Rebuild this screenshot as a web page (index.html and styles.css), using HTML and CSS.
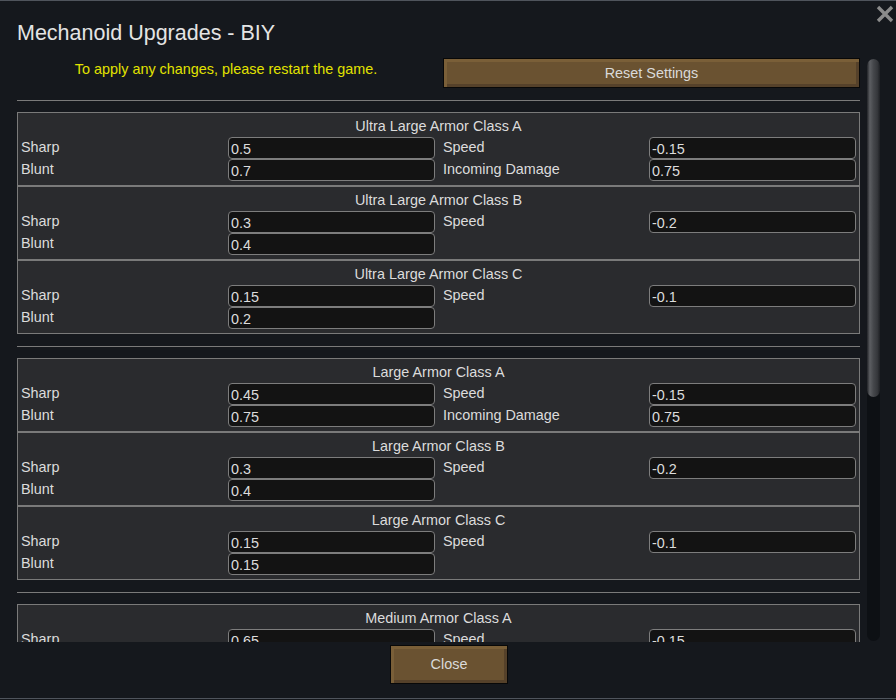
FILE: index.html
```html
<!DOCTYPE html>
<html>
<head>
<meta charset="utf-8">
<link rel="stylesheet" href="styles.css">
</head>
<body>
<div class="window">
  <div class="title">Mechanoid Upgrades - BIY</div>
  <div class="close-x">
    <svg width="18" height="18" viewBox="0 0 18 18"><path d="M2 2 L16 16 M16 2 L2 16" stroke="#8b8b8b" stroke-width="3.4" fill="none"/></svg>
  </div>
  <div class="body">
    <div class="scroll">
      <div class="top-row">
        <div class="notice">To apply any changes, please restart the game.</div>
        <div class="btn reset">Reset Settings</div>
      </div>
      <div class="sep"></div>

      <div class="group">
        <div class="sub">
          <div class="head">Ultra Large Armor Class A</div>
          <div class="grid">
            <div class="lbl">Sharp</div><div class="field">0.5</div><div class="lbl r">Speed</div><div class="field">-0.15</div>
            <div class="lbl">Blunt</div><div class="field">0.7</div><div class="lbl r">Incoming Damage</div><div class="field">0.75</div>
          </div>
        </div>
        <div class="sub">
          <div class="head">Ultra Large Armor Class B</div>
          <div class="grid">
            <div class="lbl">Sharp</div><div class="field">0.3</div><div class="lbl r">Speed</div><div class="field">-0.2</div>
            <div class="lbl">Blunt</div><div class="field">0.4</div>
          </div>
        </div>
        <div class="sub">
          <div class="head">Ultra Large Armor Class C</div>
          <div class="grid">
            <div class="lbl">Sharp</div><div class="field">0.15</div><div class="lbl r">Speed</div><div class="field">-0.1</div>
            <div class="lbl">Blunt</div><div class="field">0.2</div>
          </div>
        </div>
      </div>
      <div class="sep"></div>

      <div class="group">
        <div class="sub">
          <div class="head">Large Armor Class A</div>
          <div class="grid">
            <div class="lbl">Sharp</div><div class="field">0.45</div><div class="lbl r">Speed</div><div class="field">-0.15</div>
            <div class="lbl">Blunt</div><div class="field">0.75</div><div class="lbl r">Incoming Damage</div><div class="field">0.75</div>
          </div>
        </div>
        <div class="sub">
          <div class="head">Large Armor Class B</div>
          <div class="grid">
            <div class="lbl">Sharp</div><div class="field">0.3</div><div class="lbl r">Speed</div><div class="field">-0.2</div>
            <div class="lbl">Blunt</div><div class="field">0.4</div>
          </div>
        </div>
        <div class="sub">
          <div class="head">Large Armor Class C</div>
          <div class="grid">
            <div class="lbl">Sharp</div><div class="field">0.15</div><div class="lbl r">Speed</div><div class="field">-0.1</div>
            <div class="lbl">Blunt</div><div class="field">0.15</div>
          </div>
        </div>
      </div>
      <div class="sep"></div>

      <div class="group">
        <div class="sub">
          <div class="head">Medium Armor Class A</div>
          <div class="grid">
            <div class="lbl">Sharp</div><div class="field">0.65</div><div class="lbl r">Speed</div><div class="field">-0.15</div>
            <div class="lbl">Blunt</div><div class="field">0.6</div><div class="lbl r">Incoming Damage</div><div class="field">0.8</div>
          </div>
        </div>
      </div>
    </div>
    <div class="scrollbar"><div class="thumb"></div></div>
  </div>
  <div class="footer">
    <div class="btn close">Close</div>
  </div>
</div>
</body>
</html>
```

FILE: styles.css
```css
html, body {
  margin: 0;
  padding: 0;
  background: #15181d;
}
body {
  font-family: "Liberation Sans", Arial, sans-serif;
  font-size: 14.4px;
  color: #dcdcdc;
}
.window {
  position: relative;
  width: 896px;
  height: 699px;
  box-sizing: border-box;
  background: #15181d;
  border-top: 1px solid #4f545c;
  border-bottom: 1px solid #4f545c;
  padding: 20px 0 0 17px;
}
.title {
  font-size: 21.5px;
  line-height: 24px;
  color: #e4e4e4;
}
.close-x {
  position: absolute;
  top: 4px;
  right: 2px;
  width: 18px;
  height: 18px;
}
.close-x svg { display: block; }
.body {
  display: flex;
  margin-top: 13px;
}
.scroll {
  width: 843px;
  height: 584px;
  overflow: hidden;
}
.scrollbar {
  margin-left: 7px;
  margin-top: 1px;
  width: 13px;
  height: 582px;
  border-radius: 7px;
  background: #0d1014;
}
.thumb {
  height: 338px;
  border-radius: 7px;
  background: linear-gradient(to right, #222428 0%, #5c5e62 22%, #45474b 50%, #35373b 80%, #1e2024 100%);
}
.top-row {
  display: grid;
  grid-template-columns: 418px 417px;
  column-gap: 8px;
  height: 30px;
}
.notice {
  color: #e2e200;
  text-align: center;
  line-height: 22px;
}
.btn {
  box-sizing: border-box;
  background: #6a5231;
  border: 1px solid #080808;
  box-shadow: inset 3px 3px 0 #7a5f38, inset -3px -3px 0 #55412a;
  color: #dadada;
  text-align: center;
}
.reset {
  height: 30px;
  line-height: 28px;
}
.sep {
  height: 1px;
  background: #7a7a7a;
  margin: 12px 0 11px;
}
.sub {
  box-sizing: border-box;
  height: 74px;
  border: 1px solid #7a7a7a;
  background: #2a2b2e;
  padding: 0 3px;
}
.head {
  height: 24px;
  line-height: 26px;
  text-align: center;
}
.grid {
  display: grid;
  grid-template-columns: 207px 207px 214px 207px;
  grid-auto-rows: 22px;
}
.lbl {
  line-height: 21px;
}
.lbl.r {
  padding-left: 8px;
}
.field {
  box-sizing: border-box;
  height: 22px;
  border: 1px solid #7d7d7d;
  border-radius: 4px;
  background: #131313;
  padding: 0 2px;
  line-height: 22px;
}
.footer {
  display: flex;
  justify-content: center;
  margin-top: 3px;
  padding-right: 15px;
}
.close {
  width: 118px;
  height: 39px;
  line-height: 37px;
}
```
